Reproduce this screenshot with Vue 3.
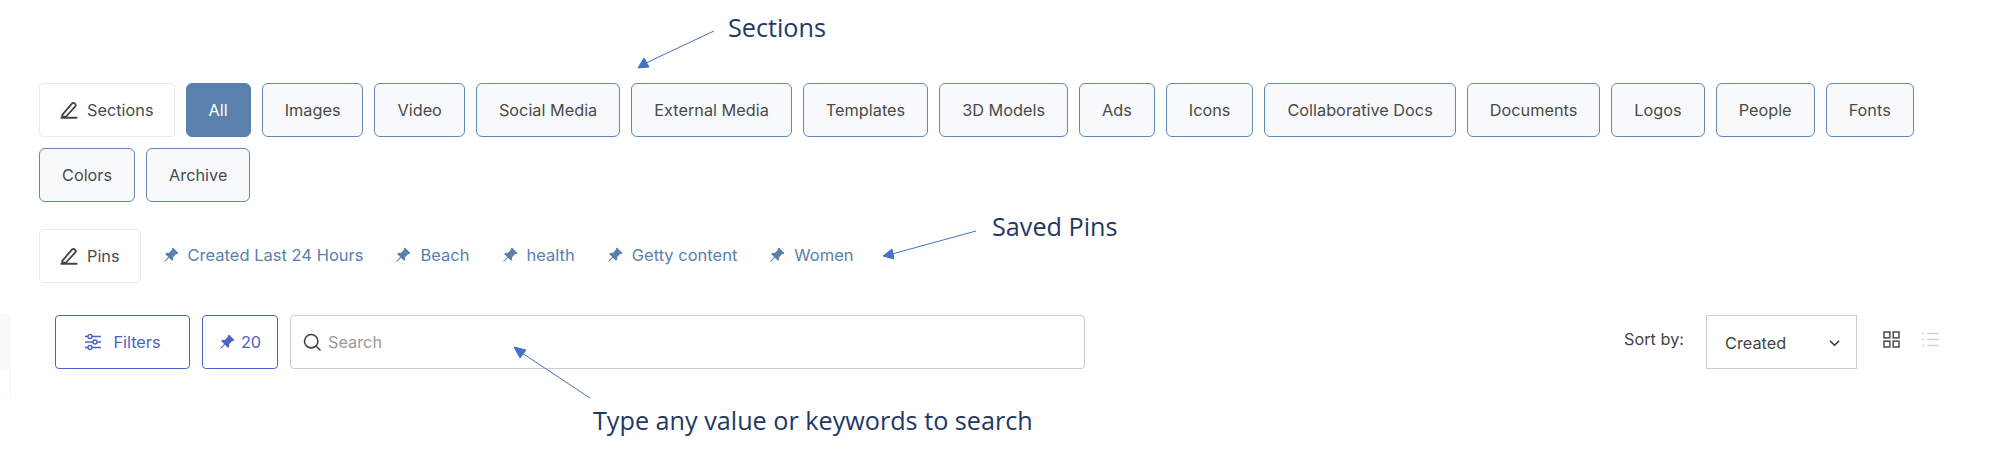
<script setup>
const sections = ['All', 'Images', 'Video', 'Social Media', 'External Media', 'Templates', '3D Models', 'Ads', 'Icons', 'Collaborative Docs', 'Documents', 'Logos', 'People', 'Fonts', 'Colors', 'Archive']
const pins = ['Created Last 24 Hours', 'Beach', 'health', 'Getty content', 'Women']
const pinPath = 'M9.828.722a.5.5 0 0 1 .354.146l4.95 4.95a.5.5 0 0 1 0 .707c-.48.48-1.072.588-1.503.588-.177 0-.335-.018-.46-.039l-3.134 3.134a5.927 5.927 0 0 1 .16 1.013c.046.702-.032 1.687-.72 2.375a.5.5 0 0 1-.707 0l-2.829-2.828-3.182 3.182c-.195.195-1.219.902-1.414.707-.195-.195.512-1.22.707-1.414l3.182-3.182-2.828-2.829a.5.5 0 0 1 0-.707c.688-.688 1.673-.767 2.375-.72a5.922 5.922 0 0 1 1.013.16l3.134-3.133a2.772 2.772 0 0 1-.04-.461c0-.43.108-1.022.589-1.503a.5.5 0 0 1 .353-.146z'
</script>

<template>
  <div class="page">
    <div class="tabs">
      <button class="edit">
        <svg class="pencil" viewBox="0 0 20 20" fill="none" stroke="#444" stroke-width="2" stroke-linejoin="round" stroke-linecap="round">
          <path d="M2.5 15.5 13.5 2.6a1.7 1.7 0 0 1 2.5-.1l1 1a1.7 1.7 0 0 1 0 2.4L6.5 17.5h-4z" />
          <path d="M1.5 18.6h17" />
        </svg>
        Sections
      </button>
      <button v-for="s in sections" :key="s" class="tab" :class="{ active: s === 'All' }">{{ s }}</button>
    </div>

    <div class="pins">
      <button class="edit">
        <svg class="pencil" viewBox="0 0 20 20" fill="none" stroke="#444" stroke-width="2" stroke-linejoin="round" stroke-linecap="round">
          <path d="M2.5 15.5 13.5 2.6a1.7 1.7 0 0 1 2.5-.1l1 1a1.7 1.7 0 0 1 0 2.4L6.5 17.5h-4z" />
          <path d="M1.5 18.6h17" />
        </svg>
        Pins
      </button>
      <a v-for="p in pins" :key="p" class="pin-link">
        <svg class="pin" viewBox="0 0 16 16" fill="#5a81ab"><path :d="pinPath" /></svg>
        {{ p }}
      </a>
    </div>

    <div class="toolbar">
      <button class="blue filters">
        <svg class="sliders" viewBox="0 0 18 18" fill="none" stroke="#4a62c9" stroke-width="1.4">
          <path d="M1 3.5h3M8 3.5h9M1 9h8M13 9h4M1 14.5h3M8 14.5h9" />
          <circle cx="6" cy="3.5" r="2" />
          <circle cx="11" cy="9" r="2" />
          <circle cx="6" cy="14.5" r="2" />
        </svg>
        Filters
      </button>
      <button class="blue count">
        <svg class="pin" viewBox="0 0 16 16" fill="#4a62c9"><path :d="pinPath" /></svg>
        20
      </button>
      <label class="search">
        <svg class="glass" viewBox="0 0 18 18" fill="none" stroke="#444" stroke-width="1.6" stroke-linecap="round">
          <circle cx="8.2" cy="8.2" r="6.7" />
          <path d="m13 13 4 4" />
        </svg>
        <input placeholder="Search" />
      </label>
      <div class="sort">
        <span class="sort-label">Sort by:</span>
        <div class="select">
          Created
          <svg class="chevron" viewBox="0 0 12 8" fill="none" stroke="#333" stroke-width="1.6"><path d="m1 1.5 5 5 5-5" /></svg>
        </div>
        <svg class="view" viewBox="0 0 17 17" fill="none" stroke="#555" stroke-width="1.6">
          <rect x="1" y="1" width="5.8" height="5.8" />
          <rect x="10.2" y="1" width="5.8" height="5.8" />
          <rect x="1" y="10.2" width="5.8" height="5.8" />
          <rect x="10.2" y="10.2" width="5.8" height="5.8" />
        </svg>
        <svg class="view list" viewBox="0 0 17 17" fill="none" stroke="#d4d4d4" stroke-width="1.6">
          <path d="M0 2.5h2M5 2.5h12M0 8.5h2M5 8.5h12M0 14.5h2M5 14.5h12" />
        </svg>
      </div>
    </div>

    <div class="side-panel"></div>

    <svg class="arrows" viewBox="0 0 2000 455" fill="#4472c4" stroke="#4472c4">
      <path d="M714 31 646 63" fill="none" />
      <path d="M638 68 644 58 649 67z" />
      <path d="M976 231 892 254" fill="none" />
      <path d="M883 256 892 249 894 259z" />
      <path d="M590 398 522 353" fill="none" />
      <path d="M514 347 526 350 520 358z" />
    </svg>
    <span class="note note-sections">Sections</span>
    <span class="note note-pins">Saved Pins</span>
    <span class="note note-search">Type any value or keywords to search</span>
  </div>
</template>

<style>
body {
  background: #fff;
}
</style>

<style scoped>
.page {
  position: relative;
  height: 455px;
  padding: 83px 30px 0 39px;
  box-sizing: border-box;
  overflow: hidden;
  font-family: Inter, "Liberation Sans", sans-serif;
  font-size: 16.3px;
  color: #4a4a4a;
}

button {
  font: inherit;
  color: inherit;
  height: 54px;
  box-sizing: border-box;
  background: #fff;
  display: inline-flex;
  align-items: center;
  justify-content: center;
}

.tabs {
  display: flex;
  flex-wrap: wrap;
  gap: 11px;
  padding-right: 40px;
}

.tab {
  padding: 0 22px;
  border: 1.5px solid #6189b4;
  border-radius: 6px;
  background: #f7f9fb;
}

.tab.active {
  background: #5a81ab;
  color: #fff;
  border-color: #5a81ab;
}

.edit {
  padding: 0 20px;
  border: 1.5px solid #ebebeb;
  border-radius: 4px;
  gap: 9px;
}

.pencil {
  width: 18px;
  height: 18px;
}

.pins {
  display: flex;
  align-items: center;
  margin-top: 27px;
}

.pins .edit {
  margin-right: 22px;
}

.pin-link {
  display: flex;
  align-items: center;
  gap: 9px;
  margin-right: 32px;
  color: #5a81ab;
  font-size: 16.5px;
  margin-bottom: 2px;
}

.pin {
  width: 16px;
  height: 16px;
}

.toolbar {
  display: flex;
  align-items: center;
  margin-top: 32px;
  margin-left: 16px;
  gap: 12px;
}

.blue {
  border: 1.5px solid #4a62c9;
  border-radius: 4px;
  color: #4a62c9;
}

.filters {
  width: 135px;
  gap: 11px;
}

.count {
  width: 76px;
  gap: 6px;
}

.sliders {
  width: 18px;
  height: 18px;
}

.search {
  width: 795px;
  height: 54px;
  box-sizing: border-box;
  border: 1.5px solid #ccc;
  border-radius: 4px;
  display: flex;
  align-items: center;
  padding-left: 12px;
  gap: 7px;
}

.glass {
  width: 18px;
  height: 18px;
}

.search input {
  flex: 1;
  border: 0;
  outline: 0;
  padding: 0;
  background: none;
  font: inherit;
}

.search input::placeholder {
  color: #9a9a9a;
}

.sort {
  margin-left: auto;
  display: flex;
  align-items: center;
  padding-right: 31px;
}

.sort-label {
  margin-right: 22px;
  margin-bottom: 6px;
  color: #444;
}

.select {
  width: 151px;
  height: 54px;
  box-sizing: border-box;
  border: 1.5px solid #ccc;
  display: flex;
  align-items: center;
  justify-content: space-between;
  padding: 2px 16px 0 18px;
  color: #444;
  margin-right: 26px;
}

.chevron {
  width: 11px;
  height: 8px;
}

.view {
  width: 17px;
  height: 17px;
  margin-bottom: 6px;
}

.view.list {
  margin-left: 22px;
}

.side-panel {
  position: absolute;
  left: 0;
  top: 314px;
  width: 9px;
  height: 84px;
  background: linear-gradient(#f8f9fb 66%, #fff 66%);
  box-shadow: 1px 0 3px rgba(0, 0, 0, 0.05);
}

.arrows {
  position: absolute;
  inset: 0;
  width: 2000px;
  height: 455px;
  pointer-events: none;
}

.note {
  position: absolute;
  font-family: "Open Sans", Lato, sans-serif;
  font-size: 25.2px;
  line-height: 30px;
  color: #1f3864;
  white-space: nowrap;
}

.note-sections {
  left: 728px;
  top: 12px;
}

.note-pins {
  left: 992px;
  top: 211px;
}

.note-search {
  left: 593px;
  top: 405px;
}
</style>
